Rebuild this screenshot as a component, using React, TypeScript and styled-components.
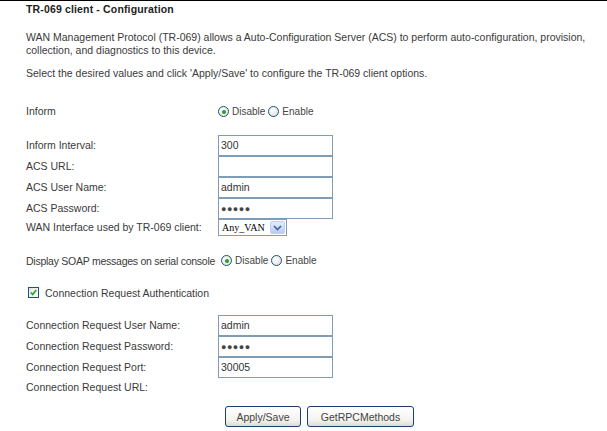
import * as React from "react";
import styled, { createGlobalStyle } from "styled-components";

const GlobalStyle = createGlobalStyle`
  html, body {
    margin: 0;
    padding: 0;
    background: #fff;
  }
  body {
    font-family: "Liberation Sans", Arial, sans-serif;
    font-size: 10.5px;
    color: #3a3a3a;
  }
`;

const Page = styled.div`
  width: 607px;
  height: 431px;
  box-sizing: border-box;
  border-top: 1px solid #000;
  padding: 1px 0 0 26px;
  overflow: hidden;
`;

const Title = styled.div`
  font-weight: bold;
  font-size: 10.5px;
  letter-spacing: 0.15px;
  color: #222;
  height: 14px;
  line-height: 14px;
`;

const Para = styled.p<{ top: number }>`
  margin: ${(p) => p.top}px 0 0;
  line-height: 13px;
  width: 575px;
`;

const Grid = styled.div<{ top: number }>`
  display: grid;
  grid-template-columns: 192px auto;
  margin-top: ${(p) => p.top}px;
  align-items: center;
`;

const Label = styled.div<{ h?: number }>`
  height: ${(p) => p.h ?? 21}px;
  line-height: ${(p) => p.h ?? 21}px;
  white-space: nowrap;
`;

const Cell = styled.div<{ h?: number }>`
  height: ${(p) => p.h ?? 21}px;
  display: flex;
  align-items: center;
`;

const InlineRow = styled.div<{ top: number }>`
  display: flex;
  align-items: center;
  gap: 6px;
  height: 21px;
  margin-top: ${(p) => p.top}px;
  white-space: nowrap;
`;

const TightLabel = styled.span`
  letter-spacing: -0.25px;
`;

const TextBox = styled.div`
  box-sizing: border-box;
  width: 115px;
  height: 21px;
  border: 1px solid #7f9db9;
  padding: 0 2px;
  line-height: 19px;
  color: #333;
`;

const Dots = styled.span`
  letter-spacing: 0.5px;
  font-size: 9px;
  color: #444;
`;

const RadioGroup = styled.div`
  display: flex;
  align-items: center;
  gap: 3px;
  font-size: 10px;
  color: #444;
`;

const Radio = styled.span<{ on?: boolean }>`
  box-sizing: border-box;
  width: 11px;
  height: 11px;
  border-radius: 50%;
  border: 1px solid #1c5180;
  background: radial-gradient(circle at 35% 35%, #fff, #dcdcd6);
  display: inline-flex;
  align-items: center;
  justify-content: center;
  &::after {
    content: "";
    width: 4px;
    height: 4px;
    border-radius: 50%;
    background: ${(p) => (p.on ? "#21a121" : "transparent")};
  }
`;

const Select = styled.div`
  box-sizing: border-box;
  width: 69px;
  height: 17px;
  border: 1px solid #7f9db9;
  display: flex;
  align-items: center;
  justify-content: space-between;
  padding: 0 1px 0 3px;
`;

const SelectText = styled.span`
  font-family: "Liberation Serif", serif;
  font-size: 10px;
  color: #000;
`;

const SelectArrow = styled.span`
  box-sizing: border-box;
  width: 15px;
  height: 13px;
  background: linear-gradient(#e3ecfd, #b5cbf7);
  border: 1px solid #bccff5;
  border-radius: 2px;
  display: flex;
  align-items: center;
  justify-content: center;
`;

const CheckRow = styled.div<{ top: number }>`
  display: flex;
  align-items: center;
  gap: 6px;
  height: 21px;
  margin: ${(p) => p.top}px 0 0 2px;
`;

const CheckBox = styled.span`
  box-sizing: border-box;
  width: 11px;
  height: 11px;
  border: 1px solid #1c5180;
  background: linear-gradient(135deg, #e4e4de, #fff);
  display: inline-flex;
  align-items: center;
  justify-content: center;
`;

const ButtonRow = styled.div<{ top: number }>`
  display: flex;
  gap: 6px;
  margin: ${(p) => p.top}px 0 0 199px;
`;

const Button = styled.div<{ w: number }>`
  box-sizing: border-box;
  width: ${(p) => p.w}px;
  height: 21px;
  border: 1px solid #1c3f6e;
  border-radius: 3px;
  background: linear-gradient(#fff, #f3f3ee 70%, #dcdcd4);
  display: flex;
  align-items: center;
  justify-content: center;
  color: #444;
`;

const RadioPair = ({ value }: { value: "Disable" | "Enable" }) => (
  <RadioGroup>
    <Radio on={value === "Disable"} />
    <span>Disable</span>
    <Radio on={value === "Enable"} />
    <span>Enable</span>
  </RadioGroup>
);

const Password = () => (
  <TextBox>
    <Dots>●●●●●</Dots>
  </TextBox>
);

export default function App() {
  return (
    <>
      <GlobalStyle />
      <Page>
        <Title>TR-069 client - Configuration</Title>
        <Para top={15}>
          WAN Management Protocol (TR-069) allows a Auto-Configuration Server (ACS) to perform
          auto-configuration, provision, collection, and diagnostics to this device.
        </Para>
        <Para top={10}>
          Select the desired values and click 'Apply/Save' to configure the TR-069 client options.
        </Para>

        <Grid top={21}>
          <Label>Inform</Label>
          <Cell>
            <RadioPair value="Disable" />
          </Cell>
        </Grid>

        <Grid top={13}>
          <Label>Inform Interval:</Label>
          <Cell>
            <TextBox>300</TextBox>
          </Cell>
          <Label>ACS URL:</Label>
          <Cell>
            <TextBox />
          </Cell>
          <Label>ACS User Name:</Label>
          <Cell>
            <TextBox>admin</TextBox>
          </Cell>
          <Label>ACS Password:</Label>
          <Cell>
            <Password />
          </Cell>
          <Label h={17}>WAN Interface used by TR-069 client:</Label>
          <Cell h={17}>
            <Select>
              <SelectText>Any_VAN</SelectText>
              <SelectArrow>
                <svg width="9" height="6" viewBox="0 0 9 6">
                  <path d="M1 1 L4.5 4.5 L8 1" fill="none" stroke="#4d6185" strokeWidth="1.6" />
                </svg>
              </SelectArrow>
            </Select>
          </Cell>
        </Grid>

        <InlineRow top={14}>
          <TightLabel>Display SOAP messages on serial console</TightLabel>
          <RadioPair value="Disable" />
        </InlineRow>

        <CheckRow top={11}>
          <CheckBox>
            <svg width="7" height="7" viewBox="0 0 7 7">
              <path d="M0.8 3.5 L2.7 5.5 L6.2 1" fill="none" stroke="#21a121" strokeWidth="1.5" />
            </svg>
          </CheckBox>
          <span>Connection Request Authentication</span>
        </CheckRow>

        <Grid top={12}>
          <Label>Connection Request User Name:</Label>
          <Cell>
            <TextBox>admin</TextBox>
          </Cell>
          <Label>Connection Request Password:</Label>
          <Cell>
            <Password />
          </Cell>
          <Label>Connection Request Port:</Label>
          <Cell>
            <TextBox>30005</TextBox>
          </Cell>
          <Label h={18}>Connection Request URL:</Label>
          <Cell h={18} />
        </Grid>

        <ButtonRow top={10}>
          <Button w={76}>Apply/Save</Button>
          <Button w={107}>GetRPCMethods</Button>
        </ButtonRow>
      </Page>
    </>
  );
}
